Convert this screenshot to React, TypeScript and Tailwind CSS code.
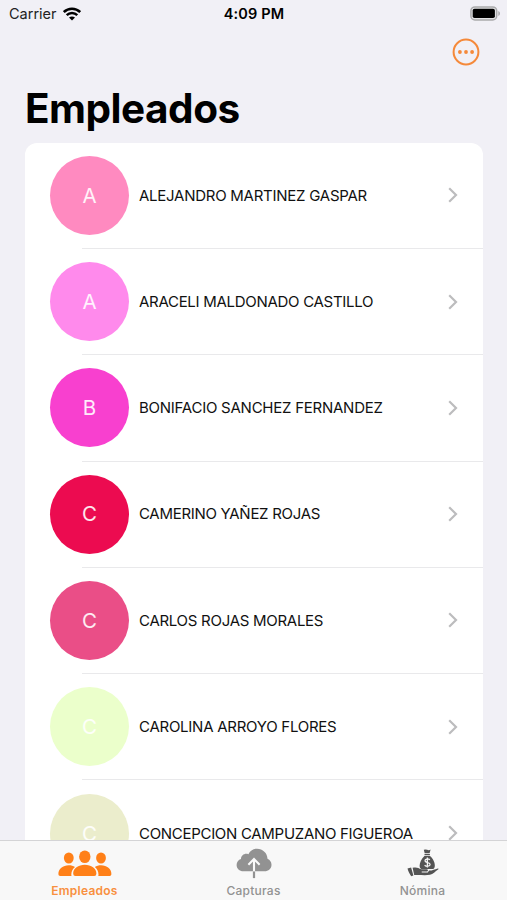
import React from "react";

type Employee = { name: string; color: string; tracking: string };

const employees: Employee[] = [
  { name: "ALEJANDRO MARTINEZ GASPAR", color: "bg-[#ff8ac0]", tracking: "tracking-[-0.26px]" },
  { name: "ARACELI MALDONADO CASTILLO", color: "bg-[#ff8aec]", tracking: "tracking-[-0.29px]" },
  { name: "BONIFACIO SANCHEZ FERNANDEZ", color: "bg-[#f840cf]", tracking: "tracking-[-0.25px]" },
  { name: "CAMERINO YAÑEZ ROJAS", color: "bg-[#ec0b50]", tracking: "tracking-[-0.3px]" },
  { name: "CARLOS ROJAS MORALES", color: "bg-[#ea4e87]", tracking: "tracking-[-0.28px]" },
  { name: "CAROLINA ARROYO FLORES", color: "bg-[#ebffcb]", tracking: "tracking-[-0.26px]" },
  { name: "CONCEPCION CAMPUZANO FIGUEROA", color: "bg-[#ebedcc]", tracking: "tracking-[-0.3px]" },
];

function WifiIcon() {
  return (
    <svg width="18" height="14" viewBox="0 0 18 14" fill="none" stroke="#000" strokeWidth="2.5">
      <path d="M.8 5C5.4.5 12.6.5 17.2 5" />
      <path d="M3.7 8.2c3-2.9 7.6-2.9 10.6 0" />
      <path d="M9 13.6 6 10.6c1.7-1.5 4.3-1.5 6 0Z" fill="#000" stroke="none" />
    </svg>
  );
}

function BatteryIcon() {
  return (
    <svg width="31" height="15" viewBox="0 0 31 15">
      <rect x="0.9" y="0.9" width="25.8" height="13" rx="4" fill="#e4e4e6" stroke="#aaaaac" strokeWidth="1.5" />
      <rect x="2.7" y="2.7" width="22.2" height="9.4" rx="1.8" fill="#000" />
      <path d="M28.3 5v5c2.2-.9 2.2-4.1 0-5Z" fill="#aaaaac" />
    </svg>
  );
}

function MoreIcon() {
  return (
    <svg width="28" height="28" viewBox="0 0 28 28" fill="#f5893a">
      <circle cx="14" cy="14" r="12.4" fill="none" stroke="#f5893a" strokeWidth="2" />
      <circle cx="7.9" cy="14" r="1.9" />
      <circle cx="14" cy="14" r="1.9" />
      <circle cx="20.1" cy="14" r="1.9" />
    </svg>
  );
}

function PeopleIcon() {
  return (
    <svg width="54" height="27" viewBox="0 0 54 27" fill="#ff8018">
      <ellipse cx="10.8" cy="8" rx="4.9" ry="5.5" />
      <ellipse cx="43" cy="8" rx="4.9" ry="5.5" />
      <path d="M.4 24.2C.2 18.8 5 15.3 10.7 15.3c2.4 0 4.6.6 6.3 1.7-2.3 1.8-3.6 4.2-3.7 7.8q0 .7.3 1.2H2.2Q.4 26 .4 24.2ZM53.4 24.2c.2-5.4-4.6-8.9-10.3-8.9-2.4 0-4.6.6-6.3 1.7 2.3 1.8 3.6 4.2 3.7 7.8q0 .7-.3 1.2h11.4q1.8 0 1.8-1.8Z" />
      <ellipse cx="26.8" cy="6.8" rx="5.7" ry="6.3" />
      <path d="M15.2 23.8c-.2-5.4 5.3-9 11.6-9s11.8 3.6 11.6 9q0 2.2-2.2 2.2H17.4q-2.2 0-2.2-2.2Z" />
    </svg>
  );
}

function CloudIcon() {
  return (
    <svg width="36" height="31" viewBox="0 0 36 31" fill="none">
      <path d="M7.5 23.3C3.4 23.3.6 20.5.6 17c0-3.1 1.8-5.3 4.4-6.1.1-3.6 4-6.2 7.4-4.6C14.1 2.7 17.2.7 21 .7c5.8 0 10.3 4.4 10.5 10 2.5 1.1 4 3.3 4 6 0 3.9-3 6.6-7.1 6.6Z" fill="#929292" />
      <path d="M18 11.4v12.2M12.4 16.7l5.6-5.6 5.6 5.6" stroke="#fafafa" strokeWidth="2.1" />
      <path d="M18 23.5v6.6" stroke="#929292" strokeWidth="2.2" />
    </svg>
  );
}

function PayrollIcon() {
  return (
    <svg width="32" height="29" viewBox="0 0 32 29" fill="#545454">
      <path d="M16.8.8q1.7-.8 3.4 0t3.4-.2l-1 3.6h-4.9ZM17.5 5h5.4v1.3h-5.4Z" />
      <path d="M17.4 6.9h5.6c3.2 2.7 5.2 7 4.8 10.3-.2 2-1.2 2.9-2.8 2.9h-9.4c-2.1 0-3-1.4-3-3.2 0-3.3 1.9-7.5 4.8-10Z" />
      <path d="M22.9 10.7c-1.8-1.3-5-.8-4.9 1.2.1 2.1 5.2 1.3 5.1 3.6-.1 2-3.6 2.3-5.5.7M20.4 8.5v10" fill="none" stroke="#f4f4f4" strokeWidth="1.3" />
      <path d="m.5 19.6 3.6-1.1 2.3 7.9-2.2.8C2.8 25.1 1.3 22.7.5 19.6ZM5.6 18.8c4.1-1 5.6.2 8.7 1.5h5.4c1.7 0 1.7 2.2 0 2.3h-5v.8h6.1l1.3-1.9c3.4.1 5.3-1.3 8.7-2.1.8 0 1 .7.3 1.2-2.9 2-5.1 4.6-8.1 5.2-5.3.8-10.1-.1-15.8.3Z" />
    </svg>
  );
}

function EmployeeRow({ employee, last }: { employee: Employee; last: boolean }) {
  return (
    <li className="flex h-[106.25px] shrink-0 flex-col">
      <div className="flex flex-1 items-center pl-[25px] pr-[25px]">
        <div className={`flex size-[79px] items-center justify-center rounded-full pt-px text-[20.5px] text-white/90 ${employee.color}`}>
          {employee.name[0]}
        </div>
        <span className={`ml-[10px] flex-1 whitespace-nowrap pt-px text-[15px] text-[#111] ${employee.tracking}`}>{employee.name}</span>
        <svg width="10" height="16" viewBox="0 0 10 16" fill="none" stroke="#bcbcbe" strokeWidth="2.2">
          <path d="m1.2 1.3 6.8 6.7-6.8 6.7" />
        </svg>
      </div>
      {!last && <div className="ml-[57px] h-px bg-[#e9e9eb]" />}
    </li>
  );
}

export default function App() {
  return (
    <div className="flex h-[900px] w-[507px] flex-col overflow-hidden bg-[#f1f0f6] font-['Inter','Liberation_Sans',sans-serif] text-black">
      <header className="grid h-[27px] shrink-0 grid-cols-3 items-center pl-[9px] pr-[6px]">
        <div className="flex items-center gap-[6px] text-[14.5px] text-[#222]">
          <span className="pt-px">Carrier</span>
          <WifiIcon />
        </div>
        <span className="-ml-[2px] whitespace-nowrap text-center text-[14.5px] font-semibold tracking-[0.15px]">4:09 PM</span>
        <div className="flex justify-end">
          <BatteryIcon />
        </div>
      </header>
      <nav className="flex h-[53px] shrink-0 items-start justify-end pr-[27px] pt-[11px]">
        <button aria-label="Opciones"><MoreIcon /></button>
      </nav>
      <h1 className="h-[62.8px] shrink-0 pl-[25px] text-[40.5px] font-bold leading-[58px] tracking-[-0.5px]">Empleados</h1>
      <main className="min-h-0 flex-1 overflow-hidden pl-[25px] pr-[24px]">
        <ul className="flex flex-col rounded-[12px] bg-white">
          {employees.map((employee, index) => (
            <EmployeeRow key={employee.name} employee={employee} last={index === employees.length - 1} />
          ))}
        </ul>
      </main>
      <footer className="grid h-[60px] shrink-0 grid-cols-3 border-t border-[#d4d4d6] bg-[#f8f8f8] text-[12px] font-medium tracking-[0.25px] text-[#929292]">
        <div className="flex flex-col items-center text-[#f8903f]">
          <div className="flex h-[42px] items-start pt-[9px]"><PeopleIcon /></div>
          <span className="font-semibold leading-[16px]">Empleados</span>
        </div>
        <div className="flex flex-col items-center">
          <div className="flex h-[42px] items-start pt-[7px]"><CloudIcon /></div>
          <span className="leading-[16px]">Capturas</span>
        </div>
        <div className="flex flex-col items-center">
          <div className="flex h-[42px] items-start pt-[8px]"><PayrollIcon /></div>
          <span className="leading-[16px]">Nómina</span>
        </div>
      </footer>
    </div>
  );
}
